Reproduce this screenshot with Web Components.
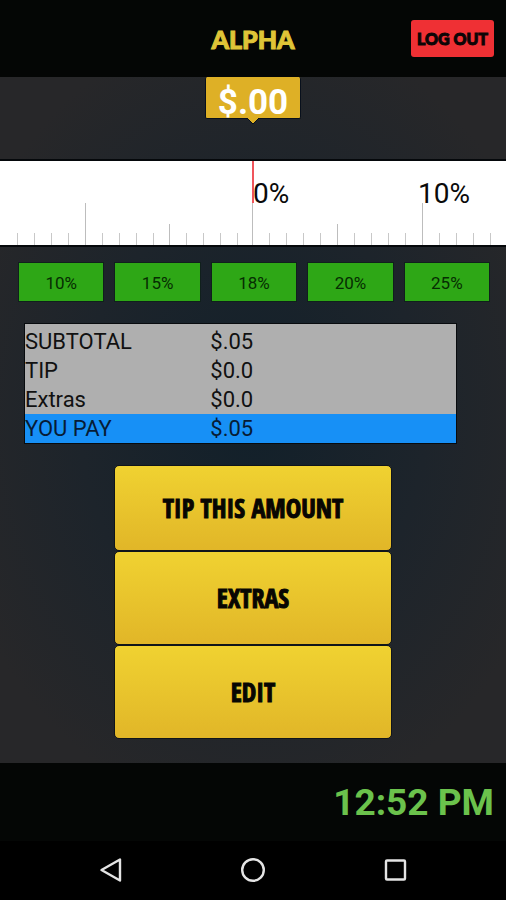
<!DOCTYPE html>
<html lang="en">
<head>
<meta charset="utf-8">
<meta name="viewport" content="width=device-width, initial-scale=1">
<title>Alpha</title>
<style>
html, body { margin: 0; min-height: 100%; background: #000; }
body { font-family: Roboto, "Liberation Sans", sans-serif; color: #000; }
</style>
</head>
<body>
<tip-screen></tip-screen>
<script>
const define = (name, html, setup) => customElements.define(name, class extends HTMLElement {
  constructor() {
    super();
    const template = document.createElement('template');
    template.innerHTML = html;
    this.attachShadow({ mode: 'open' }).append(template.content.cloneNode(true));
  }
  connectedCallback() { if (setup) setup(this, this.shadowRoot); }
});

define('app-header', `
<style>
:host { display: grid; grid-template-columns: 1fr auto 1fr; align-items: center; height: 77px; padding: 0 12px; box-sizing: border-box; background: #040605; }
h1 { grid-column: 2; margin: 0; font: 900 25px/36px Lato, sans-serif; color: #dfc437; -webkit-text-stroke: 1px #dfc437; }
button { justify-self: end; height: 37px; padding: 0 6px; border: 0; border-radius: 3px; background: #ef3034; color: #0c0506; font: 900 16px/24px Lato, sans-serif; white-space: nowrap; -webkit-text-stroke: 1px #0c0506; }
</style>
<h1><slot></slot></h1>
<button type="button">LOG OUT</button>`);

define('amount-flag', `
<style>
:host { display: block; position: relative; width: 94px; height: 41px; margin: 0 auto; border: 1px solid #08101c; box-sizing: content-box; border-top: 0; border-radius: 2px; background: #deb026; color: #fff; font-weight: 700; font-size: 35px; line-height: 52px; text-align: center; }
svg { position: absolute; left: 50%; top: 100%; margin-left: -7px; display: block; }
</style>
<slot></slot>
<svg width="14" height="7" viewBox="0 0 14 7" aria-hidden="true"><path d="M1 0 7 6 13 0" fill="#deb026" stroke="#08101c"/><path d="M2-1h10L7 5z" fill="#deb026"/></svg>`);

define('tip-ruler', `
<style>
:host { display: block; height: 84px; border: solid #05080b; border-width: 2px 0; background: #fff; overflow: hidden; }
svg { display: block; width: 100%; height: 84px; }
text { font-size: 28px; fill: #0a0a0a; }
</style>
<svg viewBox="0 0 506 84" preserveAspectRatio="xMidYMid slice" role="img" aria-label="Tip percentage ruler">
<g id="ticks"></g>
<path d="M253 0v42" stroke="#f0555c" stroke-width="2"/>
<text x="253" y="42">0%</text><text x="418" y="42">10%</text>
</svg>`, (host, root) => {
  const group = root.getElementById('ticks');
  for (let n = -14; n <= 14; n++) {
    const line = document.createElementNS('http://www.w3.org/2000/svg', 'rect');
    const top = n % 10 === 0 ? 42 : n % 5 === 0 ? 63 : 72;
    line.setAttribute('x', 253 + n * 17 - (n < 0 ? 0 : 1) + (n < -5 ? 2 : n < 0 ? 1 : 0));
    line.setAttribute('y', top);
    line.setAttribute('width', 1);
    line.setAttribute('height', 84 - top);
    line.setAttribute('fill', n % 5 === 0 ? '#bdbdbd' : '#c8c8c8');
    group.append(line);
  }
});

define('percent-button', `
<style>
:host { display: block; flex: 1; }
button { display: block; width: 100%; height: 40px; padding: 2px 0 0; border: 1px solid #10201c; background: #2ea716; color: #062d02; font: 400 17px/24px Roboto, sans-serif; }
</style>
<button type="button"><slot></slot></button>`);

define('bill-table', `
<style>
:host { display: block; padding-top: 3px; border: 1px solid #080b0e; background: #afafaf; }
table { width: 100%; table-layout: fixed; border-collapse: collapse; font-size: 22px; color: #111; }
th, td { height: 29px; padding: 0; line-height: 29px; text-align: left; font-weight: 400; }
th { width: 43%; }
tr:last-child { background: #1790f6; color: #071c35; }
</style>
<table>
<tr><th scope="row">SUBTOTAL</th><td>$.05</td></tr>
<tr><th scope="row">TIP</th><td>$0.0</td></tr>
<tr><th scope="row">Extras</th><td>$0.0</td></tr>
<tr><th scope="row">YOU PAY</th><td>$.05</td></tr>
</table>`);

define('gold-button', `
<style>
:host { display: block; }
button { display: block; width: 100%; height: var(--button-height, 94px); padding: 0; border: 1px solid #10151a; border-radius: 5px; background: linear-gradient(#f0d231, #e1b628); color: #080602; font: 700 26px/32px "Liberation Sans Narrow", "Open Sans Condensed", "DejaVu Sans Condensed", sans-serif; -webkit-text-stroke: 1px #080602; }
</style>
<button type="button"><slot></slot></button>`);

define('clock-bar', `
<style>
:host { display: flex; align-items: center; justify-content: flex-end; height: 78px; padding: 2px 12px 0; box-sizing: border-box; background: #040605; color: #6bc24c; font-size: 37px; line-height: 44px; font-weight: 700; }
</style>
<slot></slot>`);

define('system-nav', `
<style>
:host { display: block; background: #000; }
nav { display: flex; justify-content: center; gap: 94px; padding: 5px 0 6px; }
button { display: flex; align-items: center; justify-content: center; width: 48px; height: 48px; padding: 0; border: 0; background: none; }
svg { fill: none; stroke: #e4e4e4; stroke-width: 2.4; stroke-linejoin: round; overflow: visible; }
</style>
<nav>
<button type="button" aria-label="Back"><svg width="26" height="26" viewBox="0 0 26 26"><path d="M22 2.500V23.500L3.500 13Z"/></svg></button>
<button type="button" aria-label="Home"><svg width="26" height="26" viewBox="0 0 26 26"><circle cx="13" cy="13" r="10.800"/></svg></button>
<button type="button" aria-label="Recent apps"><svg width="26" height="26" viewBox="0 0 26 26"><rect x="4" y="3.500" width="19" height="19" rx="1"/></svg></button>
</nav>`);

define('tip-screen', `
<style>
:host { display: flex; flex-direction: column; min-height: 100vh; }
main { flex: 1; box-sizing: border-box; background: radial-gradient(ellipse 62% 58% at 50% 50%, #12202a, #1d242b 55%, #272729); padding-bottom: 23px; }
tip-ruler { margin-top: 40px; }
.percents { display: flex; gap: 10px; padding: 15px 16px 0 18px; }
bill-table { margin: 21px 49px 0 24px; }
.actions { width: 55%; margin: 21px auto 0; }
gold-button:first-child { --button-height: 86px; }
</style>
<app-header>ALPHA</app-header>
<main>
<amount-flag>$.00</amount-flag>
<tip-ruler></tip-ruler>
<div class="percents"><percent-button>10%</percent-button><percent-button>15%</percent-button><percent-button>18%</percent-button><percent-button>20%</percent-button><percent-button>25%</percent-button></div>
<bill-table></bill-table>
<div class="actions"><gold-button>TIP THIS AMOUNT</gold-button><gold-button>EXTRAS</gold-button><gold-button>EDIT</gold-button></div>
</main>
<clock-bar>12:52 PM</clock-bar>
<system-nav></system-nav>`);
</script>
</body>
</html>
